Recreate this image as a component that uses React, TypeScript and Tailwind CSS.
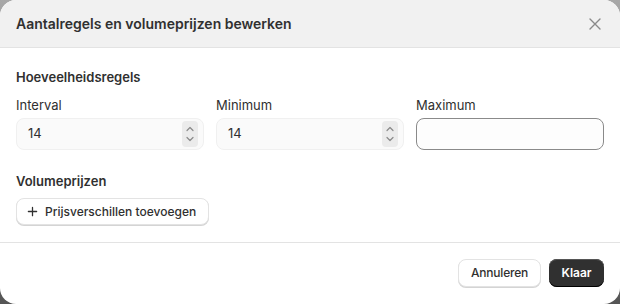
import React from 'react';

const ChevronSpinner: React.FC = () => (
  <div className="flex h-[26px] w-[16px] flex-col items-center justify-center rounded-[4px] bg-[#ebebeb]">
    <svg className="h-[10px] w-[10px]" viewBox="0 0 10 10" fill="none" stroke="#8a8a8a" strokeWidth={1.2} strokeLinecap="round" strokeLinejoin="round">
      <path d="M2 6.5L5 3.5L8 6.5" />
    </svg>
    <svg className="h-[10px] w-[10px]" viewBox="0 0 10 10" fill="none" stroke="#8a8a8a" strokeWidth={1.2} strokeLinecap="round" strokeLinejoin="round">
      <path d="M2 3.5L5 6.5L8 3.5" />
    </svg>
  </div>
);

const NumberField: React.FC<{ label: string; value?: string; spinner?: boolean }> = ({ label, value, spinner }) => (
  <div className="flex flex-col">
    <label className="mb-[3px] text-[13px] leading-[20px] text-[#303030]">{label}</label>
    {spinner ? (
      <div className="flex h-[32px] items-center justify-between rounded-[8px] border border-[#f0f0f0] bg-[#fafafa] pl-[11px] pr-[5px]">
        <span className="text-[13px] text-[#303030]">{value}</span>
        <ChevronSpinner />
      </div>
    ) : (
      <div className="h-[32px] rounded-[8px] border border-[#8a8a8a] bg-[#fdfdfd]" />
    )}
  </div>
);

const App: React.FC = () => {
  return (
    <div className="h-[304px] w-[620px] bg-gradient-to-b from-[#a8a8a8] to-[#555555]" style={{ fontFamily: 'Inter, "Noto Sans", sans-serif' }}>
      <div className="flex h-[304px] flex-col overflow-hidden rounded-[16px] bg-white text-[#303030]">
        <div className="flex h-[48px] items-center justify-between border-b border-[#e3e3e3] bg-[#f1f1f1] pl-[16px] pr-[18px]">
          <h2 className="text-[14px] font-semibold">Aantalregels en volumeprijzen bewerken</h2>
          <svg className="h-[14px] w-[14px]" viewBox="0 0 14 14" fill="none" stroke="#8a8a8a" strokeWidth={1.4} strokeLinecap="round">
            <path d="M2 2L12 12M12 2L2 12" />
          </svg>
        </div>

        <div className="flex flex-col px-[16px] pt-[19px]">
          <h3 className="text-[13px] font-semibold leading-[20px]">Hoeveelheidsregels</h3>
          <div className="mt-[8px] grid grid-cols-3 gap-[12px]">
            <NumberField label="Interval" value="14" spinner />
            <NumberField label="Minimum" value="14" spinner />
            <NumberField label="Maximum" />
          </div>

          <h3 className="mt-[21px] text-[13px] font-semibold leading-[20px]">Volumeprijzen</h3>
          <div className="mt-[7px]">
            <button className="flex h-[27px] items-center gap-[7px] rounded-[8px] border border-[#e3e3e3] bg-white pl-[10px] pr-[12px] text-[12px] font-medium text-[#303030] shadow-[0_1px_0_0_#d4d4d4]">
              <svg className="h-[11px] w-[11px]" viewBox="0 0 12 12" fill="none" stroke="#303030" strokeWidth={1.4} strokeLinecap="round">
                <path d="M6 1.5V10.5M1.5 6H10.5" />
              </svg>
              Prijsverschillen toevoegen
            </button>
          </div>
        </div>

        <div className="mt-[17px] border-t border-[#e3e3e3]" />

        <div className="flex justify-end gap-[8px] px-[16px] pt-[16px]">
          <button className="h-[28px] w-[83px] rounded-[8px] border border-[#e3e3e3] bg-white text-[12px] font-medium tracking-[-0.2px] text-[#303030] shadow-[0_1px_0_0_#d4d4d4]">
            Annuleren
          </button>
          <button className="h-[28px] w-[55px] rounded-[8px] bg-[#303030] text-[12px] font-semibold text-white shadow-[inset_0_-1px_0_0_#000,inset_0_1px_0_0_#555]">
            Klaar
          </button>
        </div>
      </div>
    </div>
  );
};

export default App;
